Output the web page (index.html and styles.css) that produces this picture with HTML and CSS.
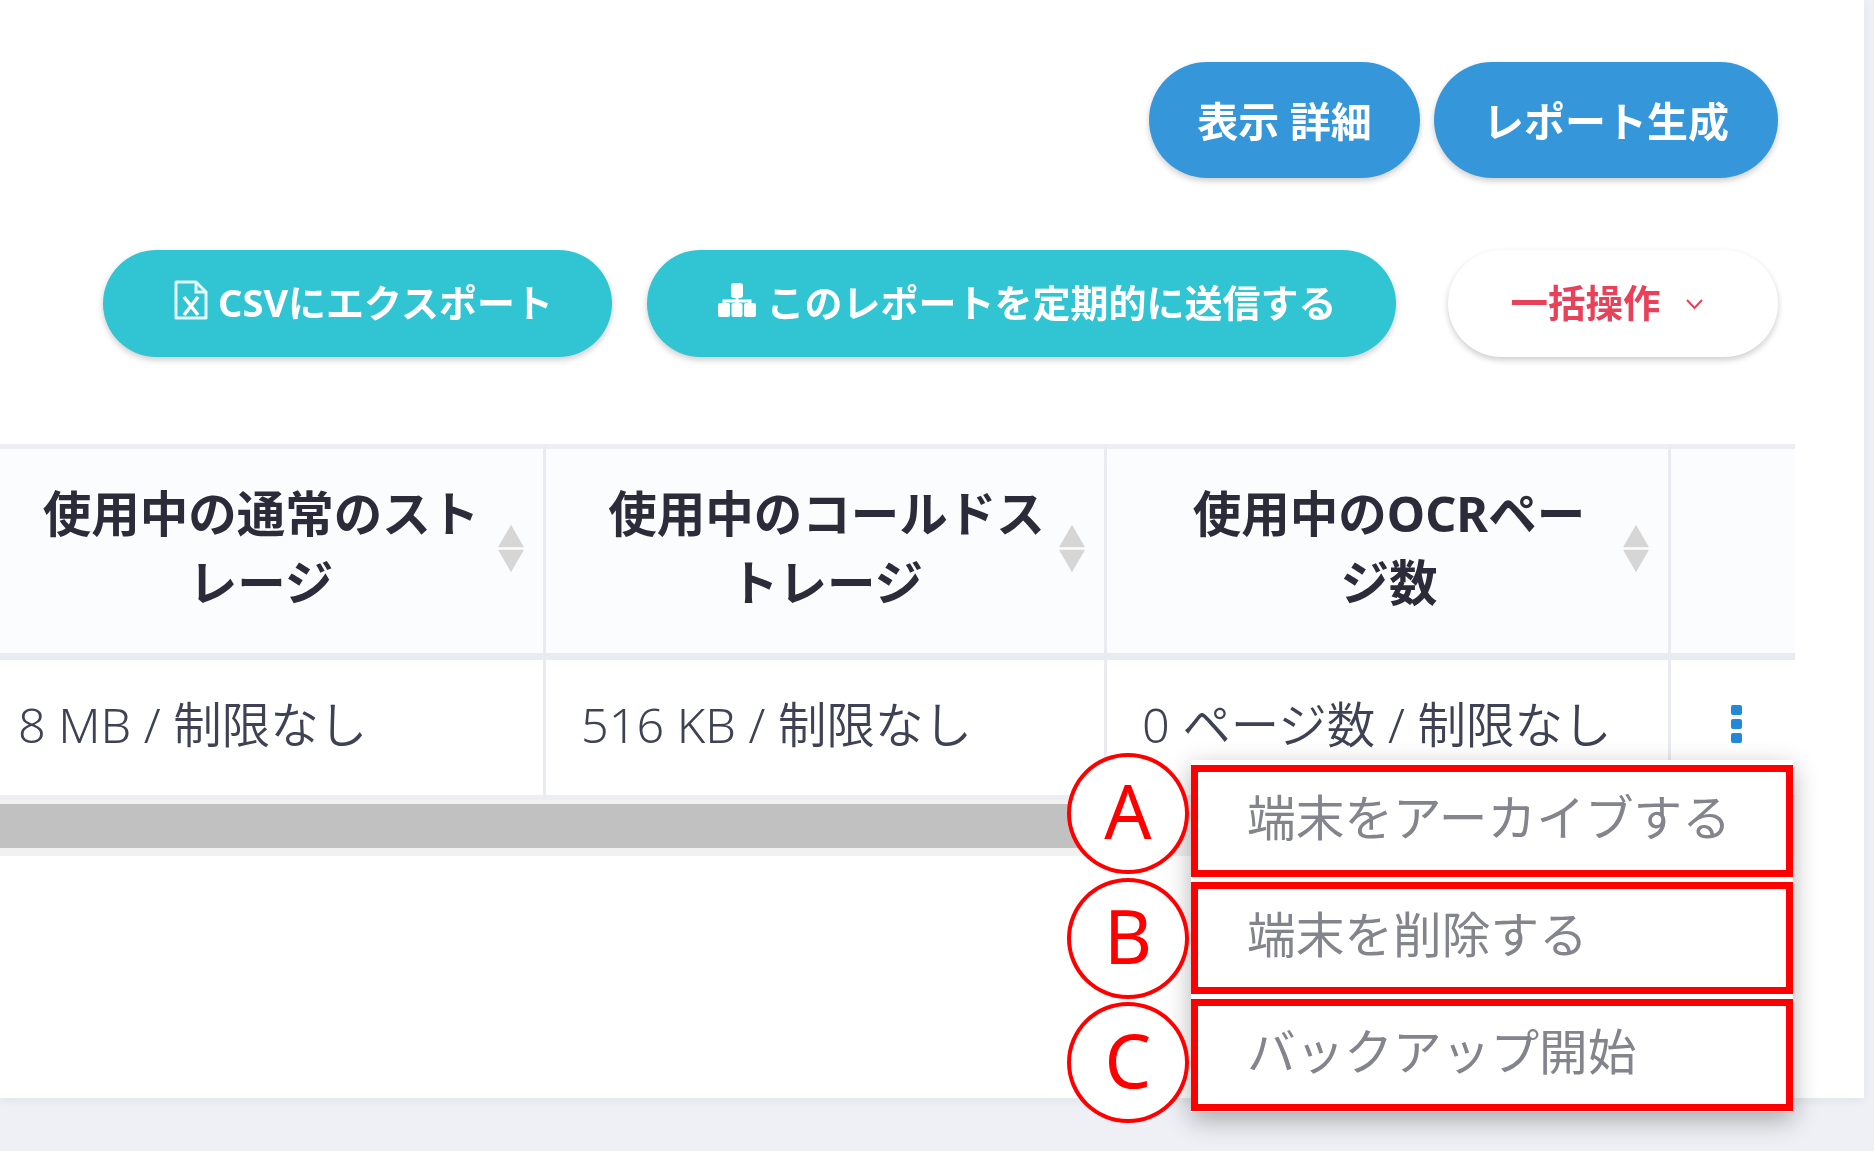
FILE: index.html
```html
<!DOCTYPE html>
<html lang="ja">
  <head>
    <meta charset="utf-8" />
    <title>端末レポート</title>
    <link rel="stylesheet" href="styles.css">
  </head>
  <body>
    <div class="page">
      <div class="card">
        <div class="actions actions-top">
          <button class="btn btn-blue btn-detail">表示 詳細</button>
          <button class="btn btn-blue btn-report">レポート生成</button>
        </div>
        <div class="actions actions-main">
          <button class="btn btn-teal btn-csv">
            <svg class="icon-file" viewBox="0 0 34 40">
              <path d="M2 2h20l10 10v26H2z" fill="none" stroke="#e4f7fa" stroke-width="3" stroke-linejoin="round"/>
              <path d="M22 2v10h10" fill="none" stroke="#e4f7fa" stroke-width="3"/>
              <path d="M10 17l14 18M24 17L10 35" fill="none" stroke="#fff" stroke-width="3.500"/>
            </svg>
            <span>CSVにエクスポート</span>
          </button>
          <button class="btn btn-teal btn-send">
            <svg class="icon-tree" viewBox="0 0 38 34">
              <rect x="13" y="0" width="12" height="15" rx="3" fill="#fff"/>
              <path d="M19 12v10M6 22v-4h26v4" fill="none" stroke="#fff" stroke-width="3"/>
              <rect x="0" y="20" width="12" height="14" rx="2" fill="#fff"/>
              <rect x="13.500" y="20" width="11" height="14" rx="2" fill="#fff"/>
              <rect x="26" y="20" width="12" height="14" rx="2" fill="#fff"/>
            </svg>
            <span>このレポートを定期的に送信する</span>
          </button>
          <button class="btn btn-white btn-bulk">
            <span>一括操作</span>
            <svg class="icon-chevron" viewBox="0 0 19 12">
              <path d="M2 2l7.500 8L17 2" fill="none" stroke="#e8415a" stroke-width="2"/>
            </svg>
          </button>
        </div>
        <div class="table-wrap">
          <table class="report">
            <colgroup>
              <col class="col-a"><col class="col-b"><col class="col-c"><col class="col-d">
            </colgroup>
            <thead>
              <tr>
                <th>使用中の通常のスト<br>レージ
                  <svg class="sort" viewBox="0 0 29 53"><path d="M14.500 0L29 25H0zM0 28h29L14.500 53z"/></svg>
                </th>
                <th>使用中のコールドス<br>トレージ
                  <svg class="sort" viewBox="0 0 29 53"><path d="M14.500 0L29 25H0zM0 28h29L14.500 53z"/></svg>
                </th>
                <th>使用中のOCRペー<br>ジ数
                  <svg class="sort" viewBox="0 0 29 53"><path d="M14.500 0L29 25H0zM0 28h29L14.500 53z"/></svg>
                </th>
                <th></th>
              </tr>
            </thead>
            <tbody>
              <tr>
                <td>8 MB / 制限なし</td>
                <td>516 KB / 制限なし</td>
                <td>0 ページ数 / 制限なし</td>
                <td>
                  <div class="dots"><i></i><i></i><i></i></div>
                </td>
              </tr>
            </tbody>
          </table>
          <div class="scroll-track"><div class="scroll-thumb"></div></div>
        </div>
      </div>

      <ul class="menu">
        <li>端末をアーカイブする</li>
        <li>端末を削除する</li>
        <li>バックアップ開始</li>
      </ul>
      <div class="mark mark-a">A</div>
      <div class="mark mark-b">B</div>
      <div class="mark mark-c">C</div>
    </div>
  </body>
</html>
```

FILE: styles.css
```css
html, body {
  margin: 0;
  height: 100%;
}
body {
  background-color: #eef0f5;
  font-family: "Noto Sans", "Noto Sans CJK JP", sans-serif;
  overflow: hidden;
}
.page {
  position: relative;
  width: 1874px;
  height: 1151px;
  overflow: hidden;
}
.card {
  box-sizing: border-box;
  width: 1864px;
  height: 1098px;
  padding-top: 62px;
  background-color: #fff;
  box-shadow: 0 3px 10px rgba(0, 0, 0, 0.05);
  filter: blur(0.6px);
}
.actions {
  display: flex;
  justify-content: flex-end;
  padding-right: 86px;
}
.actions-top {
  gap: 14px;
  margin-bottom: 72px;
}
.actions-main {
  margin-bottom: 87px;
}
.btn {
  display: flex;
  align-items: center;
  justify-content: center;
  border: 0;
  border-radius: 60px;
  color: #fff;
  font-family: inherit;
  font-weight: 700;
  padding: 0;
  box-shadow: 0 3px 6px rgba(0, 0, 0, 0.2);
}
.btn-blue {
  height: 116px;
  padding-bottom: 2px;
  background-color: #3596da;
  font-size: 41px;
}
.btn-teal {
  height: 107px;
  padding: 0 0 7px 12px;
  background-color: #31c4d2;
  font-size: 38px;
}
.btn-white {
  height: 107px;
  padding: 0 12px 7px 0;
  background-color: #fff;
  color: #e8415a;
  font-size: 37.500px;
}
.btn-detail {
  width: 271px;
}
.btn-report {
  width: 344px;
}
.btn-csv {
  width: 509px;
  margin-right: 35px;
}
.btn-send {
  width: 749px;
  margin-right: 52px;
}
.btn-bulk {
  width: 330px;
}
.icon-file {
  width: 34px;
  height: 40px;
  margin-right: 10px;
}
.icon-tree {
  width: 38px;
  height: 34px;
  margin-right: 10px;
}
.icon-chevron {
  width: 19px;
  height: 12px;
  margin: 7px 0 0 24px;
}
.table-wrap {
  margin-right: 69px;
  overflow: hidden;
}
.report {
  table-layout: fixed;
  width: 1819px;
  margin-left: -24px;
  border-collapse: separate;
  border-spacing: 0;
}
.col-a {
  width: 570px;
}
.col-b {
  width: 561px;
}
.col-c {
  width: 564px;
}
.col-d {
  width: 124px;
}
.report th {
  position: relative;
  box-sizing: border-box;
  height: 216px;
  padding: 0 38px 6px 41px;
  background-color: #fbfcfe;
  border-top: 5px solid #eceef3;
  border-bottom: 7px solid #e8ebf0;
  border-right: 3px solid #e8ebf0;
  color: #2b2b3a;
  font-size: 48.500px;
  font-weight: 700;
  line-height: 69px;
  text-align: center;
  white-space: nowrap;
}
.report td {
  box-sizing: border-box;
  height: 140px;
  padding: 0 36px 8px 35px;
  border-right: 3px solid #e8ebf0;
  border-bottom: 5px solid #eceef2;
  color: #3f4254;
  font-size: 48.500px;
  font-weight: 350;
  line-height: 60px;
  white-space: nowrap;
}
.report td:first-child {
  padding-left: 42px;
}
.report th:last-child,
.report td:last-child {
  border-right: 0;
}
.sort {
  position: absolute;
  top: 73px;
  right: 19px;
  width: 26px;
  height: 53px;
  fill: #d6d6d6;
}
.dots {
  display: flex;
  flex-direction: column;
  gap: 4px;
  width: 11px;
  margin-left: 25px;
}
.dots i {
  display: block;
  height: 10px;
  border-radius: 2px;
  background-color: #2289d8;
}
.scroll-track {
  height: 44px;
  padding: 4px 0 8px;
  background-color: #f1f1f1;
}
.scroll-thumb {
  width: 1100px;
  height: 100%;
  background-color: #c1c1c1;
}
.menu {
  position: absolute;
  left: 1191px;
  top: 760px;
  box-sizing: border-box;
  display: flex;
  flex-direction: column;
  gap: 5px;
  width: 602px;
  height: 352px;
  margin: 0;
  padding: 5px 0 0;
  list-style: none;
  background-color: #fff;
  box-shadow: 0 8px 24px rgba(0, 0, 0, 0.3);
}
.menu li {
  box-sizing: border-box;
  height: 112px;
  padding: 0 0 12px 49px;
  display: flex;
  align-items: center;
  border: 7px solid #f00;
  color: #83848c;
  font-size: 48.700px;
  font-weight: 400;
}
.mark {
  position: absolute;
  left: 1067px;
  box-sizing: border-box;
  display: flex;
  align-items: center;
  justify-content: center;
  width: 122px;
  height: 121px;
  padding-bottom: 5px;
  border: 4px solid #f00;
  border-radius: 50%;
  background-color: #fff;
  color: #f00;
  font-size: 74px;
  line-height: 1;
}
.mark-a {
  top: 753px;
}
.mark-b {
  top: 878px;
}
.mark-c {
  top: 1002px;
}
```
